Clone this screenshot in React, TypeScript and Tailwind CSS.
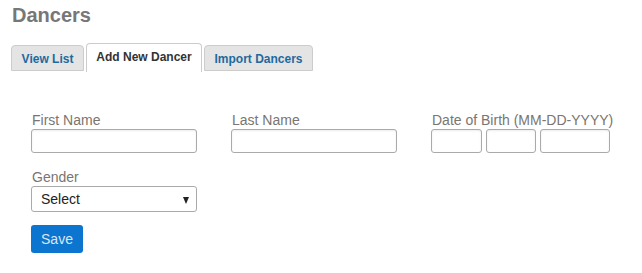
import { useState } from "react";

const tabs = [
    { label: "View List", w: "w-[73px]" },
    { label: "Add New Dancer", w: "w-[116px]" },
    { label: "Import Dancers", w: "w-[109px]" },
];

export default function App() {
    const [active, setActive] = useState(1);

    return (
        <div className="w-[642px] h-[273px] bg-white font-['Liberation_Sans',Arial,sans-serif]">
            <h1 className="pl-3 pt-[3px] text-[20px] leading-[24px] font-bold text-[#777]">Dancers</h1>

            <div className="flex items-end gap-[2px] pl-[11px] mt-[15px] h-[29px]">
                {tabs.map((t, i) =>
                    i === active ? (
                        <button
                            key={t.label}
                            onClick={() => setActive(i)}
                            className={`${t.w} h-[29px] pb-[2px] bg-white border border-b-0 border-[#ccc] rounded-t-[4px] text-[12px] font-bold text-[#333] translate-y-[1px]`}
                        >
                            {t.label}
                        </button>
                    ) : (
                        <button
                            key={t.label}
                            onClick={() => setActive(i)}
                            className={`${t.w} h-[26px] pt-[2px] bg-[#e4e4e4] border border-[#ccc] rounded-t-[4px] text-[12px] font-bold text-[#1e6a9e]`}
                        >
                            {t.label}
                        </button>
                    )
                )}
            </div>

            <form className="pl-[31px] pt-[41px]" onSubmit={(e) => e.preventDefault()}>
                <div className="grid grid-cols-[200px_200px_200px]">
                    <label className="flex flex-col">
                        <span className="text-[14px] leading-[17px] text-[#7a7570] pl-px">First Name</span>
                        <input className="w-[166px] h-[24px] border border-[#aaa] rounded-[3px] shadow-[inset_0_1px_2px_rgba(0,0,0,0.08)]" />
                    </label>
                    <label className="flex flex-col">
                        <span className="text-[14px] leading-[17px] text-[#7a7570] pl-px">Last Name</span>
                        <input className="w-[166px] h-[24px] border border-[#aaa] rounded-[3px] shadow-[inset_0_1px_2px_rgba(0,0,0,0.08)]" />
                    </label>
                    <div className="flex flex-col">
                        <span className="text-[14px] leading-[17px] text-[#7a7570] pl-px">Date of Birth (MM-DD-YYYY)</span>
                        <div className="flex gap-[4px]">
                            <input className="w-[51px] h-[24px] border border-[#aaa] rounded-[3px] shadow-[inset_0_1px_2px_rgba(0,0,0,0.08)]" />
                            <input className="w-[50px] h-[24px] border border-[#aaa] rounded-[3px] shadow-[inset_0_1px_2px_rgba(0,0,0,0.08)]" />
                            <input className="w-[70px] h-[24px] border border-[#aaa] rounded-[3px] shadow-[inset_0_1px_2px_rgba(0,0,0,0.08)]" />
                        </div>
                    </div>
                </div>

                <label className="flex flex-col mt-[16px] w-[166px]">
                    <span className="text-[14px] leading-[17px] text-[#7a7570] pl-px">Gender</span>
                    <div className="relative w-[166px] h-[26px] border border-[#aaa] rounded-[3px] flex items-center">
                        <select className="appearance-none w-full h-full pl-[9px] text-[14px] text-[#222] bg-transparent outline-none">
                            <option>Select</option>
                            <option>Female</option>
                            <option>Male</option>
                        </select>
                        <span className="absolute right-[7px] top-[10px] w-0 h-0 border-l-[3.5px] border-r-[3.5px] border-t-[7px] border-l-transparent border-r-transparent border-t-[#222] pointer-events-none" />
                    </div>
                </label>

                <button className="mt-[13px] w-[52px] h-[28px] bg-[#0b75d0] rounded-[3px] text-[14px] text-[#dde6f0]">
                    Save
                </button>
            </form>
        </div>
    );
}
